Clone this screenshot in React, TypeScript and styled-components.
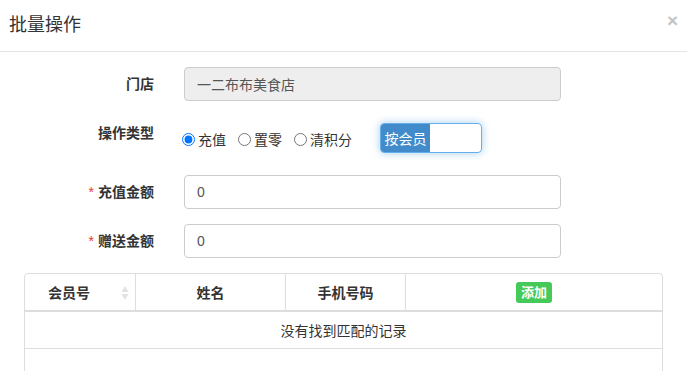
import { FC } from "react";
import styled, { createGlobalStyle } from "styled-components";

const GlobalStyle = createGlobalStyle`
	html, body {
		margin: 0;
		padding: 0;
		background: #fff;
	}
	body {
		font-family: "Liberation Sans", "Noto Sans CJK SC", sans-serif;
		font-size: 14px;
		color: #333;
	}
`;

const Modal = styled.div`
	width: 687px;
	height: 371px;
	overflow: hidden;
	background: #fff;
`;

const Header = styled.div`
	height: 51px;
	border-bottom: 1px solid #e5e5e5;
	display: flex;
	align-items: center;
	justify-content: space-between;
	padding: 0 9px;
`;

const Title = styled.h4`
	margin: 0;
	font-size: 18px;
	font-weight: 400;
	color: #333;
	padding-bottom: 6px;
`;

const Close = styled.span`
	font-size: 19px;
	font-weight: 700;
	color: #c4c4c4;
	line-height: 1;
	padding-bottom: 10px;
`;

const Body = styled.div`
	padding-top: 15px;
`;

const Row = styled.div`
	display: grid;
	grid-template-columns: 154px 377px;
	column-gap: 30px;
	margin-bottom: 15px;
`;

const Label = styled.label`
	text-align: right;
	font-weight: 700;
	line-height: 34px;
	color: #333;
`;

const Star = styled.span`
	color: #e33;
	margin-right: 4px;
	font-weight: 400;
`;

const Input = styled.div<{ $disabled?: boolean }>`
	box-sizing: border-box;
	height: 34px;
	border: 1px solid #ccc;
	border-radius: 4px;
	padding: 0 12px;
	display: flex;
	align-items: center;
	color: #555;
	background: ${p => (p.$disabled ? "#eee" : "#fff")};
`;

const Controls = styled.div`
	display: flex;
	align-items: center;
	height: 30px;
	padding: 7px 0;
	margin-left: -2px;
`;

const RadioLabel = styled.label`
	display: inline-flex;
	align-items: center;
	margin-right: 12px;
	padding-top: 2px;
	color: #333;
	white-space: nowrap;

	input {
		margin: 0 3px 0 0;
		width: 13px;
		height: 13px;
	}
`;

const Toggle = styled.div`
	display: flex;
	box-sizing: border-box;
	width: 102px;
	height: 30px;
	margin-left: 16px;
	border: 1px solid #66afe9;
	border-radius: 4px;
	overflow: hidden;
	box-shadow: 0 0 8px rgba(102, 175, 233, 0.6);
`;

const ToggleOn = styled.span`
	width: 49px;
	background: #428bca;
	color: #fff;
	display: flex;
	align-items: center;
	justify-content: center;
`;

const Table = styled.div`
	margin: 0 24px;
	width: 639px;
	box-sizing: border-box;
	border: 1px solid #ddd;
	border-radius: 4px 4px 0 0;
`;

const HeadRow = styled.div`
	display: grid;
	grid-template-columns: 111px 150px 120px 1fr;
	height: 36px;
	border-bottom: 2px solid #ddd;
`;

const Th = styled.div<{ $last?: boolean; $sortable?: boolean }>`
	position: relative;
	display: flex;
	align-items: center;
	justify-content: center;
	font-weight: 700;
	padding-right: ${p => (p.$sortable ? "22px" : "0")};
	border-right: ${p => (p.$last ? "none" : "1px solid #ddd")};
`;

const SortIcon = styled.svg`
	position: absolute;
	right: 6px;
	top: 11px;
`;

const AddButton = styled.span`
	background: #45c958;
	color: #fff;
	font-size: 13px;
	border-radius: 3px;
	padding: 0 5px;
	height: 21px;
	line-height: 21px;
`;

const BodyRow = styled.div<{ $h: number }>`
	height: ${p => p.$h}px;
	border-bottom: 1px solid #ddd;
	display: flex;
	align-items: center;
	justify-content: center;
	color: #333;
`;

const App: FC = () => {
	return (
		<Modal>
			<GlobalStyle />
			<Header>
				<Title>批量操作</Title>
				<Close>×</Close>
			</Header>
			<Body>
				<Row>
					<Label>门店</Label>
					<Input $disabled>一二布布美食店</Input>
				</Row>
				<Row>
					<Label>操作类型</Label>
					<Controls>
						<RadioLabel>
							<input type="radio" name="op" defaultChecked />
							充值
						</RadioLabel>
						<RadioLabel>
							<input type="radio" name="op" />
							置零
						</RadioLabel>
						<RadioLabel>
							<input type="radio" name="op" />
							清积分
						</RadioLabel>
						<Toggle>
							<ToggleOn>按会员</ToggleOn>
						</Toggle>
					</Controls>
				</Row>
				<Row>
					<Label>
						<Star>*</Star>充值金额
					</Label>
					<Input>0</Input>
				</Row>
				<Row>
					<Label>
						<Star>*</Star>赠送金额
					</Label>
					<Input>0</Input>
				</Row>
				<Table>
					<HeadRow>
						<Th $sortable>
							会员号
							<SortIcon width="8" height="16" viewBox="0 0 8 16">
								<path d="M4 1 L7.5 7 H0.5 Z" fill="#e2e2e2" />
								<path d="M4 15 L7.5 9 H0.5 Z" fill="#e2e2e2" />
							</SortIcon>
						</Th>
						<Th>姓名</Th>
						<Th>手机号码</Th>
						<Th $last>
							<AddButton>添加</AddButton>
						</Th>
					</HeadRow>
					<BodyRow $h={36}>没有找到匹配的记录</BodyRow>
					<BodyRow $h={36} />
				</Table>
			</Body>
		</Modal>
	);
};

export default App;
